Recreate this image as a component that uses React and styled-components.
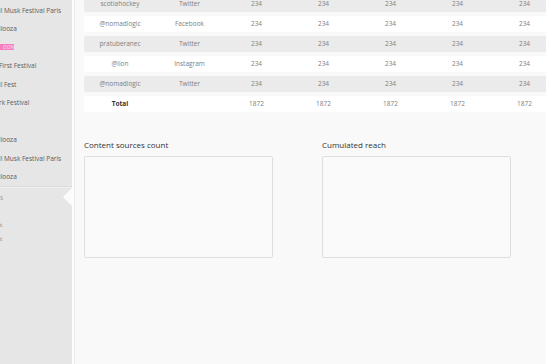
import React from "react";
import styled, { createGlobalStyle } from "styled-components";

const GlobalStyle = createGlobalStyle`
  html, body, #root {
    margin: 0;
    height: 100%;
  }
  body {
    font-family: "Open Sans", "Liberation Sans", sans-serif;
    background: #f9f9f9;
  }
`;

const events = [
  { name: "ll Musk Festival Paris" },
  { name: "llooza" },
  { badge: "OON" },
  { name: "First Festival" },
  { name: "ll Fest" },
  { name: "rk Festival" },
  { name: "" },
  { name: "llooza" },
  { name: "ll Musk Festival Paris" },
  { name: "llooza" },
];

const rows = [
  { source: "scotiahockey", network: "Twitter" },
  { source: "@nomadlogic", network: "Facebook" },
  { source: "pratuberanec", network: "Twitter" },
  { source: "@lion", network: "Instagram" },
  { source: "@nomadlogic", network: "Twitter" },
];

const App = () => {
  return (
    <Page>
      <GlobalStyle />
      <Sidebar>
        <SideList>
          {events.map((e, i) => (
            <SideItem key={i}>
              {e.badge ? <Badge>{e.badge}</Badge> : e.name}
            </SideItem>
          ))}
        </SideList>
        <Divider />
        <ActiveItem>s</ActiveItem>
        <SubList>
          <SubItem>t</SubItem>
          <SubItem>t</SubItem>
        </SubList>
      </Sidebar>

      <Main>
        <Table>
          <tbody>
            {rows.map((r, i) => (
              <Row key={i} $shaded={i % 2 === 0}>
                <Cell $first>{r.source}</Cell>
                <Cell>{r.network}</Cell>
                {[0, 1, 2, 3, 4].map((n) => (
                  <Cell key={n}>234</Cell>
                ))}
              </Row>
            ))}
            <Row>
              <Cell $first $bold>Total</Cell>
              <Cell />
              {[0, 1, 2, 3, 4].map((n) => (
                <Cell key={n}>1872</Cell>
              ))}
            </Row>
          </tbody>
        </Table>

        <Charts>
          <Panel>
            <PanelTitle>Content sources count</PanelTitle>
            <ChartBox />
          </Panel>
          <Panel>
            <PanelTitle>Cumulated reach</PanelTitle>
            <ChartBox />
          </Panel>
        </Charts>
      </Main>
    </Page>
  );
};

export default App;

const Page = styled.div`
  display: flex;
  height: 100vh;
  overflow: hidden;
`;

const Sidebar = styled.aside`
  width: 72px;
  flex-shrink: 0;
  background: #e6e6e6;
  box-shadow: 2px 0 0 #fdfdfd, 3px 0 0 #ececec;
  overflow: hidden;
  position: relative;
  z-index: 1;
`;

const SideList = styled.div`
  padding-top: 1px;
`;

const SideItem = styled.div`
  height: 18.5px;
  display: flex;
  align-items: center;
  font-size: 6.5px;
  color: #5a5a5a;
  white-space: nowrap;
  margin-left: -1px;
`;

const Badge = styled.span`
  display: inline-block;
  background: #f47fc0;
  color: #fde3f1;
  font-size: 4.5px;
  line-height: 6px;
  height: 6px;
  width: 14px;
  margin-left: 1px;
  padding-left: 3px;
  box-sizing: border-box;
  letter-spacing: 0.2px;
`;

const Divider = styled.div`
  height: 1px;
  background: #dcdcdc;
  box-shadow: 0 1px 0 #efefef;
`;

const ActiveItem = styled.div`
  position: relative;
  height: 19px;
  margin-top: 1px;
  display: flex;
  align-items: center;
  font-size: 6.5px;
  color: #999;

  &::after {
    content: "";
    position: absolute;
    right: 0;
    top: 0;
    border-top: 9px solid transparent;
    border-bottom: 9px solid transparent;
    border-right: 9px solid #fbfbfb;
  }
`;

const SubList = styled.div`
  padding-top: 11px;
`;

const SubItem = styled.div`
  height: 14px;
  display: flex;
  align-items: center;
  font-size: 6px;
  color: #777;
`;

const Main = styled.main`
  flex: 1;
  min-width: 0;
  overflow: hidden;
  padding-left: 12px;
`;

const Table = styled.table`
  border-collapse: separate;
  border-spacing: 0 4px;
  margin-top: -8px;
  table-layout: fixed;
  width: 474px;
`;

const Row = styled.tr`
  td {
    background: ${(p) => (p.$shaded ? "#ebebeb" : "#ffffff")};
  }
`;

const Cell = styled.td`
  height: 16px;
  padding: 0;
  width: ${(p) => (p.$first ? "72px" : "67px")};
  text-align: center;
  font-size: 6.5px;
  line-height: 16px;
  white-space: nowrap;
  color: ${(p) => (p.$bold ? "#333" : "#808080")};
  font-weight: ${(p) => (p.$bold ? 700 : 400)};
  border-radius: ${(p) => (p.$first ? "3px 0 0 3px" : "0")};
`;

const Charts = styled.div`
  display: flex;
  gap: 49px;
  margin-top: 24px;
`;

const Panel = styled.div`
  width: 189px;
`;

const PanelTitle = styled.div`
  font-size: 8px;
  line-height: 10px;
  color: #333;
  margin-bottom: 6px;
`;

const ChartBox = styled.div`
  height: 102px;
  box-sizing: border-box;
  border: 1px solid #dedede;
  border-radius: 2px;
  background: #fafafa;
`;
